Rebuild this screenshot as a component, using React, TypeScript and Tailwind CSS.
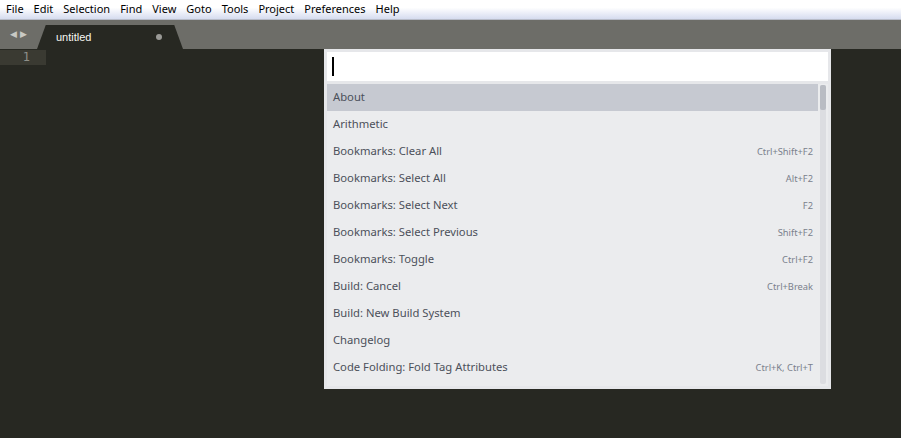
import React from "react";

type Cmd = { label: string; keys?: string };

const commands: Cmd[] = [
  { label: "About" },
  { label: "Arithmetic" },
  { label: "Bookmarks: Clear All", keys: "Ctrl+Shift+F2" },
  { label: "Bookmarks: Select All", keys: "Alt+F2" },
  { label: "Bookmarks: Select Next", keys: "F2" },
  { label: "Bookmarks: Select Previous", keys: "Shift+F2" },
  { label: "Bookmarks: Toggle", keys: "Ctrl+F2" },
  { label: "Build: Cancel", keys: "Ctrl+Break" },
  { label: "Build: New Build System" },
  { label: "Changelog" },
  { label: "Code Folding: Fold Tag Attributes", keys: "Ctrl+K, Ctrl+T" },
];

const menus = ["File", "Edit", "Selection", "Find", "View", "Goto", "Tools", "Project", "Preferences", "Help"];

export default function App() {
  return (
    <div className="w-[901px] h-[438px] flex flex-col bg-[#272822] overflow-hidden font-['Noto_Sans',sans-serif]">
      {/* menu bar */}
      <div className="h-[20px] flex items-center gap-[10px] pl-[6px] text-[11px] text-black bg-gradient-to-b from-white from-40% to-[#d6dcef] border-b border-[#b8bcc8]">
        {menus.map((m) => (
          <span key={m}>{m}</span>
        ))}
      </div>

      {/* tab bar */}
      <div className="h-[29px] flex items-end bg-[#6d6d68]">
        <div className="w-[37px] h-full flex items-center justify-center gap-[3px] text-[#c9c9c4] text-[9px] pb-[1px]">
          <span>◀</span>
          <span>▶</span>
        </div>
        <div className="relative w-[146px] h-[24px] bg-[#272822] [clip-path:polygon(6%_0,94%_0,100%_100%,0_100%)]">
          <div className="flex items-center justify-between h-full pl-[19px] pr-[21px] text-[11px] text-[#f8f8f2] font-['Liberation_Sans',sans-serif]">
            <span>untitled</span>
            <span className="w-[6px] h-[6px] rounded-full bg-[#9a9a96]" />
          </div>
        </div>
      </div>

      {/* editor */}
      <div className="relative flex-1">
        <div className="w-[46px] h-[15px] mt-[1px] bg-[#3a3a32] text-[#8f908a] text-[12px] leading-[15px] text-right pr-[16px] font-['DejaVu_Sans_Mono',monospace]">
          1
        </div>

        {/* command palette */}
        <div className="absolute left-[324px] top-0 w-[507px] bg-[#e6e7ea] p-[3px]">
          <div className="h-[29px] bg-white flex items-center pl-[5px]">
            <span className="w-[2px] h-[19px] bg-black" />
          </div>
          <div className="mt-[3px] h-[302px] flex overflow-hidden">
            <div className="flex-1 bg-[#ebecee]">
              {commands.map((c, i) => (
                <div
                  key={c.label}
                  className={`h-[27px] flex items-center justify-between pl-[6px] pr-[5px] ${
                    i === 0 ? "bg-[#c6c9d1]" : ""
                  }`}
                >
                  <span className="text-[11.25px] text-[#4b505a]">{c.label}</span>
                  {c.keys && <span className="text-[9.3px] text-[#7a808c]">{c.keys}</span>}
                </div>
              ))}
            </div>
            <div className="w-[10px] bg-[#ebecee] flex justify-center pt-[1px]">
              <div className="w-[6px] h-[299px] rounded-[2px] bg-[#dcdde1] relative">
                <div className="absolute top-0 left-0 w-[6px] h-[25px] rounded-[2px] bg-[#b9bcc3]" />
              </div>
            </div>
          </div>
        </div>
      </div>
    </div>
  );
}
